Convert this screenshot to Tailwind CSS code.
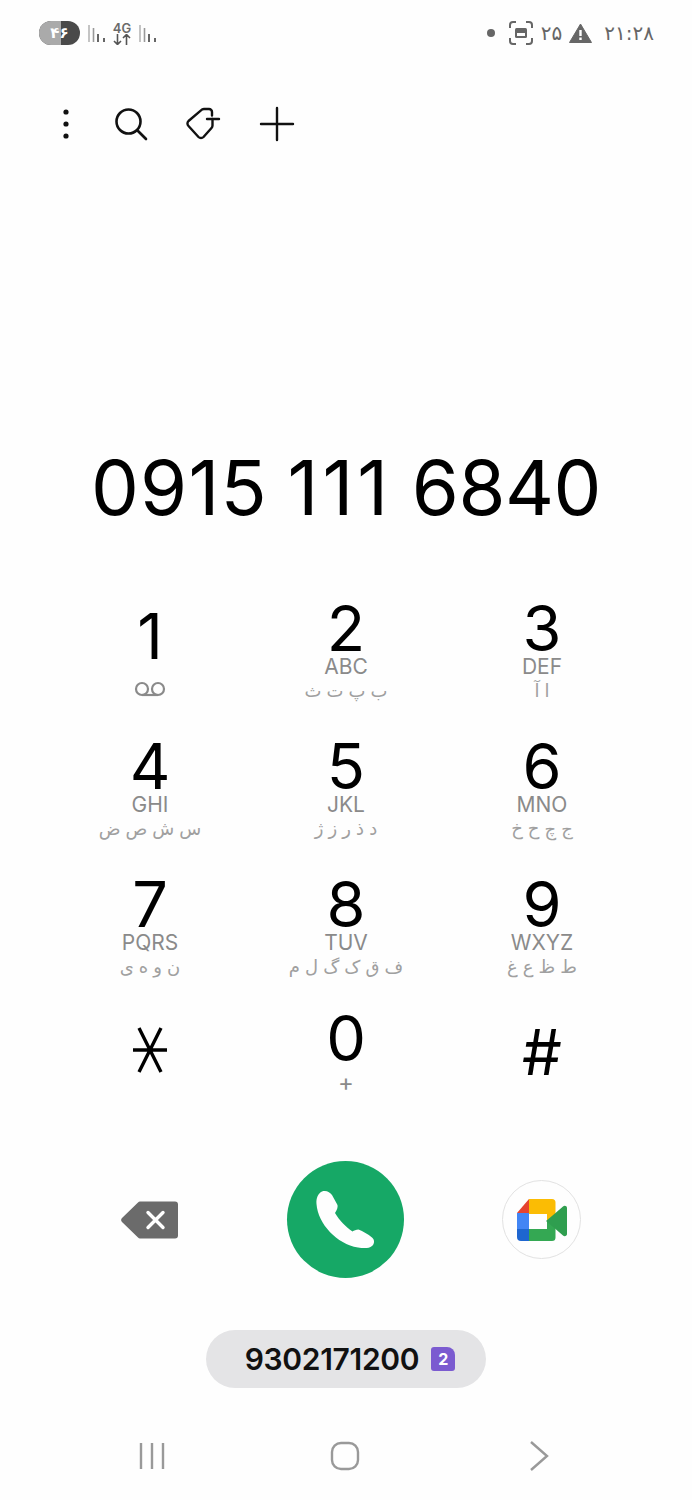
<!DOCTYPE html>
<html lang="fa">
<head>
<meta charset="utf-8">
<script src="https://cdn.jsdelivr.net/npm/@tailwindcss/browser@4"></script>
</head>
<body class="m-0">
<div class="w-[692px] h-[1500px] overflow-hidden flex flex-col bg-[#fefefe] font-['Inter','DejaVu_Sans',sans-serif] text-black">

  <!-- status bar -->
  <div class="h-[66px] flex items-center justify-between pl-[39px] pr-[38px] text-[#666]">
    <div class="flex items-center">
      <div class="w-[41px] h-[24px] rounded-full overflow-hidden flex bg-[#4a4a4a] relative">
        <div class="w-[22px] bg-[#aaaaaa]"></div>
        <span class="absolute inset-0 flex items-center justify-center text-white text-[15px] font-bold font-['DejaVu_Sans',sans-serif]">۴۶</span>
      </div>
      <svg class="ml-[7px]" width="19" height="20" viewBox="0 0 19 20"><path d="M2 2v17" stroke="#c4c4c4" stroke-width="2"/><path d="M6.500 5v14" stroke="#999" stroke-width="1.600"/><path d="M11 11v8" stroke="#666" stroke-width="2"/><path d="M17 15v4" stroke="#666" stroke-width="2"/></svg>
      <div class="ml-[6px] w-[20px] flex flex-col items-center">
        <span class="text-[13px] font-semibold leading-[12px] text-[#6a6a6a]">4G</span>
        <svg width="18" height="11" viewBox="0 0 18 11" fill="none" stroke="#555" stroke-width="1.600"><path d="M4.500 0v10M1 7l3.500 3.500L8 7M13.500 11V1M10 4l3.500-3.500L17 4"/></svg>
      </div>
      <svg class="ml-[6px]" width="19" height="20" viewBox="0 0 19 20"><path d="M2 2v17" stroke="#c4c4c4" stroke-width="2"/><path d="M6.500 5v14" stroke="#999" stroke-width="1.600"/><path d="M11 11v8" stroke="#666" stroke-width="2"/><path d="M17 15v4" stroke="#666" stroke-width="2"/></svg>
    </div>
    <div class="flex items-center">
      <div class="w-[8px] h-[8px] rounded-full bg-[#666]"></div>
      <svg class="ml-[14px]" width="24" height="24" viewBox="0 0 24 24" fill="none" stroke="#666" stroke-width="2"><path d="M1 7V4q0-3 3-3h3M17 1h3q3 0 3 3v3M23 17v3q0 3-3 3h-3M7 23H4q-3 0-3-3v-3"/><rect x="6" y="7" width="12" height="10" rx="1.500" fill="#666" stroke="none"/><rect x="8" y="12" width="8" height="3" fill="#fefefe" stroke="none"/></svg>
      <span class="ml-[8px] text-[20px] leading-none font-['DejaVu_Sans',sans-serif]">۲۵</span>
      <svg class="ml-[7px]" width="23" height="20" viewBox="0 0 23 20"><path d="M11.500 1 22.500 19.500H.5z" fill="#666" stroke="#666" stroke-linejoin="round"/><path d="M10.300 7h2.400v6h-2.400zM10.300 14.500h2.400v2.500h-2.400z" fill="#fefefe"/></svg>
      <span class="ml-[12px] text-[20px] leading-none font-['DejaVu_Sans',sans-serif]">۲۱:۲۸</span>
    </div>
  </div>

  <!-- toolbar -->
  <div class="h-[116px] pl-[52px] flex items-center">
    <svg width="28" height="36" viewBox="0 0 28 36" fill="#111"><circle cx="14" cy="6" r="2.600"/><circle cx="14" cy="18" r="2.600"/><circle cx="14" cy="30" r="2.600"/></svg>
    <svg class="ml-[34px]" width="34" height="34" viewBox="0 0 34 34" fill="none" stroke="#111" stroke-width="2.600" stroke-linecap="round"><circle cx="14.500" cy="14.500" r="12"/><path d="M24 24l8 8"/></svg>
    <svg class="ml-[37px]" width="36" height="36" viewBox="0 0 36 36" fill="none" stroke="#111" stroke-width="2.400" stroke-linecap="round" stroke-linejoin="round"><path d="M27 9.500V6a3 3 0 0 0-3-3h-5a4 4 0 0 0-3 1.300L3.500 15a3.500 3.500 0 0 0 0 5l10 11a3.500 3.500 0 0 0 5 0l8-9a4 4 0 0 0 1-2.600V13"/><path d="M22 13h12"/></svg>
    <svg class="ml-[38px]" width="36" height="36" viewBox="0 0 36 36" fill="none" stroke="#111" stroke-width="2.400" stroke-linecap="round"><path d="M18 2v32M2 18h32"/></svg>
  </div>

  <!-- number -->
  <div class="h-[415px] flex items-end justify-center">
    <div class="text-[76px] leading-[90px] tracking-[1.200px] [word-spacing:-3px] font-normal pb-[65px] whitespace-nowrap">0915 <span class="tracking-[4px]">111</span> <span class="tracking-[-0.5px]">6840</span></div>
  </div>

  <!-- keypad -->
  <div class="ml-[52px] w-[588px] grid grid-cols-3 auto-rows-[138px] text-center font-['Inter','DejaVu_Sans',sans-serif]">
    <div class="flex flex-col items-center pt-[8px]"><div class="text-[63px] leading-[62px] font-normal">1</div><svg class="mt-[14px]" width="32" height="16" viewBox="0 0 32 16" fill="none" stroke="#8a8a8a" stroke-width="2.200"><circle cx="8" cy="8" r="6"/><circle cx="24" cy="8" r="6"/><path d="M8 14h16"/></svg></div>
    <div class="flex flex-col items-center pt-[4px]"><div class="text-[63px] leading-[54px] font-normal">2</div><div class="text-[21px] leading-[24px] text-[#8a8a8a]">ABC</div><div dir="rtl" class="text-[18px] leading-[24px] text-[#a0a0a0] whitespace-nowrap">ب پ ت ث</div></div>
    <div class="flex flex-col items-center pt-[4px]"><div class="text-[63px] leading-[54px] font-normal">3</div><div class="text-[21px] leading-[24px] text-[#8a8a8a]">DEF</div><div dir="rtl" class="text-[18px] leading-[24px] text-[#a0a0a0] whitespace-nowrap">ا آ</div></div>

    <div class="flex flex-col items-center pt-[4px]"><div class="text-[63px] leading-[54px] font-normal">4</div><div class="text-[21px] leading-[24px] text-[#8a8a8a]">GHI</div><div dir="rtl" class="text-[18px] leading-[24px] text-[#a0a0a0] whitespace-nowrap">س ش ص ض</div></div>
    <div class="flex flex-col items-center pt-[4px]"><div class="text-[63px] leading-[54px] font-normal">5</div><div class="text-[21px] leading-[24px] text-[#8a8a8a]">JKL</div><div dir="rtl" class="text-[18px] leading-[24px] text-[#a0a0a0] whitespace-nowrap">د ذ ر ز ژ</div></div>
    <div class="flex flex-col items-center pt-[4px]"><div class="text-[63px] leading-[54px] font-normal">6</div><div class="text-[21px] leading-[24px] text-[#8a8a8a]">MNO</div><div dir="rtl" class="text-[18px] leading-[24px] tracking-[1.500px] text-[#a0a0a0] whitespace-nowrap">ج چ ح خ</div></div>

    <div class="flex flex-col items-center pt-[4px]"><div class="text-[63px] leading-[54px] font-normal">7</div><div class="text-[21px] leading-[24px] text-[#8a8a8a]">PQRS</div><div dir="rtl" class="text-[18px] leading-[24px] text-[#a0a0a0] whitespace-nowrap">ن و ه ی</div></div>
    <div class="flex flex-col items-center pt-[4px]"><div class="text-[63px] leading-[54px] font-normal">8</div><div class="text-[21px] leading-[24px] text-[#8a8a8a]">TUV</div><div dir="rtl" class="text-[18px] leading-[24px] text-[#a0a0a0] whitespace-nowrap">ف ق ک گ ل م</div></div>
    <div class="flex flex-col items-center pt-[4px]"><div class="text-[63px] leading-[54px] font-normal">9</div><div class="text-[21px] leading-[24px] text-[#8a8a8a]">WXYZ</div><div dir="rtl" class="text-[18px] leading-[24px] text-[#a0a0a0] whitespace-nowrap">ط ظ ع غ</div></div>

    <div class="flex flex-col items-center pt-[16px]"><svg width="34" height="46" viewBox="0 0 34 46" fill="none" stroke="#000" stroke-width="3.400"><path d="M6 1l22 44M28 1L6 45M0 23h34"/></svg></div>
    <div class="flex flex-col items-center"><div class="text-[63px] leading-[54px] font-normal">0</div><div class="mt-[6px] text-[24px] leading-[24px] text-[#8a8a8a]">+</div></div>
    <div class="flex flex-col items-center pt-[14px]"><div class="text-[63px] leading-[54px] font-normal">#</div></div>
  </div>

  <!-- actions -->
  <div class="mt-[12px] ml-[51px] w-[589px] grid grid-cols-3 items-center justify-items-center h-[117px]">
    <svg width="57" height="38" viewBox="0 0 57 38"><path d="M19 .5H54a3 3 0 0 1 3 3v31a3 3 0 0 1-3 3H19a3 3 0 0 1-2-1L1 21a3 3 0 0 1 0-4L17 1.500a3 3 0 0 1 2-1z" fill="#6b6b6b"/><path d="M27 11.500l15 15M42 11.500l-15 15" stroke="#fff" stroke-width="3.400" stroke-linecap="round"/></svg>
    <div class="w-[117px] h-[117px] rounded-full bg-[#16a866] flex items-center justify-center">
      <svg width="64" height="64" viewBox="313 1187 64 64"><path d="M322 1190.500C326 1189 330 1191 332 1194L337.500 1204C338 1206 337 1209 335 1212C339 1219 346 1226 352.500 1230.500C354 1229.500 356 1228.500 358.500 1228.500C363 1230.500 368 1233 372 1236.500C375 1239 374.500 1243 372 1245C369 1247.500 364 1247.500 358 1246.500C337 1243 318 1223 316.500 1203C316 1197 318 1192.500 322 1190.500Z" fill="#fefefe"/></svg>
    </div>
    <div class="w-[79px] h-[79px] rounded-full border border-[#e2e2e2] flex items-center justify-center">
      <svg width="50" height="42" viewBox="517 1198 50 42">
        <path d="M529 1198 517 1212h12z" fill="#e5432f"/>
        <path d="M529 1198h23a3.500 3.500 0 0 1 3.500 3.500v12.500l-8.500 6v-7h-18z" fill="#fbbc04"/>
        <path d="M517 1212h12v16h-12z" fill="#4285f4"/>
        <path d="M517 1228h12v12h-8a4 4 0 0 1-4-4z" fill="#1e66d0"/>
        <path d="M529 1228h18v-8l8.500 5v11.500a3.500 3.500 0 0 1-3.500 3.500h-23z" fill="#34a853"/>
        <path d="M546 1220 555.500 1212 563 1205.500c1.500-1.300 4-.5 4 1.500v26c0 2-2.500 2.800-4 1.500L555.500 1228z" fill="#2f9e4f"/>
      </svg>
    </div>
  </div>

  <!-- sim pill -->
  <div class="mt-[52px] flex justify-center">
    <div class="w-[280px] h-[58px] rounded-full bg-[#e4e4e6] flex items-center justify-center gap-[12px] pl-[8px]">
      <span class="text-[30px] font-semibold tracking-[-0.3px] leading-none text-[#111]">9302171200</span>
      <div class="w-[24px] h-[24px] rounded-[3px] rounded-tr-[8px] bg-[#7b5bd0] text-white text-[16px] font-bold flex items-center justify-center">2</div>
    </div>
  </div>

  <!-- nav -->
  <div class="mt-[40px] h-[56px] ml-[52px] w-[588px] grid grid-cols-3 items-center justify-items-center">
    <svg class="translate-x-[2px]" width="26" height="28" viewBox="0 0 26 28" stroke="#999" stroke-width="2.400"><path d="M2 1v26M13 1v26M24 1v26"/></svg>
    <svg class="-translate-x-[1px]" width="30" height="30" viewBox="0 0 30 30" fill="none" stroke="#999" stroke-width="2.400"><rect x="2" y="2" width="26" height="26" rx="9"/></svg>
    <svg width="20" height="30" viewBox="0 0 20 30" fill="none" stroke="#999" stroke-width="2.400" class="translate-x-[-3px]"><path d="M2 1l16 14L2 29"/></svg>
  </div>
</div>
</body>
</html>
